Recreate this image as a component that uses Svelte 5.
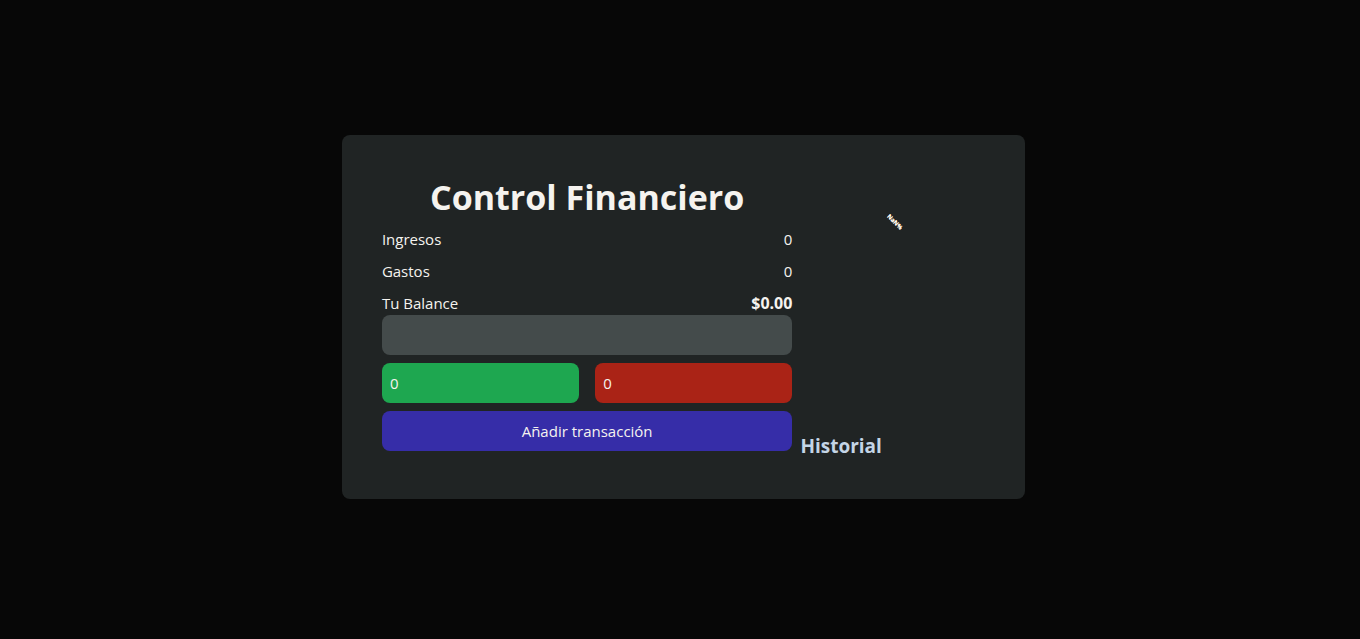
<script>
  let description = $state('');
  let income = $state(0);
  let expense = $state(0);
  let transactions = $state([]);

  const totalIncome = $derived(transactions.reduce((sum, t) => sum + t.income, 0));
  const totalExpense = $derived(transactions.reduce((sum, t) => sum + t.expense, 0));
  const balance = $derived(totalIncome - totalExpense);
  const share = (part) => `${Math.round((part * 100) / (totalIncome + totalExpense))}%`;

  function addTransaction(event) {
    event.preventDefault();
    transactions = [...transactions, { description, income: Number(income), expense: Number(expense) }];
    description = '';
    income = 0;
    expense = 0;
  }
</script>

<div class="page">
  <main class="card">
    <section class="panel">
      <h1>Control Financiero</h1>
      <dl class="totals">
        <div class="row"><dt>Ingresos</dt><dd>{totalIncome}</dd></div>
        <div class="row"><dt>Gastos</dt><dd>{totalExpense}</dd></div>
        <div class="row"><dt>Tu Balance</dt><dd class="balance">${balance.toFixed(2)}</dd></div>
      </dl>
      <form onsubmit={addTransaction}>
        <input class="field" type="text" aria-label="Descripción" bind:value={description} />
        <div class="amounts">
          <input class="field income" type="text" inputmode="decimal" aria-label="Ingreso" bind:value={income} />
          <input class="field expense" type="text" inputmode="decimal" aria-label="Gasto" bind:value={expense} />
        </div>
        <button type="submit">Añadir transacción</button>
      </form>
    </section>
    <section class="side">
      <svg class="chart" viewBox="0 0 185 96" role="img" aria-label="Ingresos y gastos">
        <g transform="translate(95 47) rotate(45)" text-anchor="middle" font-size="6" font-weight="700">
          <text y="2" fill="#ffdfae">{share(totalIncome)}</text>
          <text y="2" fill="#ffffff">{share(totalExpense)}</text>
        </g>
      </svg>
      <h2>Historial</h2>
    </section>
  </main>
</div>

<style>
  :global(body) {
    margin: 0;
    background: #070707;
  }

  .page {
    box-sizing: border-box;
    min-height: 100vh;
    padding: 0 0 5px 7px;
    display: flex;
    align-items: center;
    justify-content: center;
    color: #f5f3ef;
    font: 15px/24px "Open Sans", "Noto Sans", sans-serif;
  }

  .card {
    box-sizing: border-box;
    width: 50.5%;
    padding: 40px;
    border-radius: 8px;
    background: #202424;
    display: grid;
    grid-template-columns: 20fr 9fr;
    gap: 8px;
  }

  .panel,
  .side,
  .totals,
  form {
    display: flex;
    flex-direction: column;
    min-width: 0;
  }

  h1 {
    margin: 0;
    padding: 2px 0 10px;
    font-size: 34px;
    line-height: 40px;
    font-weight: 700;
    text-align: center;
  }

  .totals {
    margin: 0;
    gap: 8px;
  }

  .row {
    display: flex;
    justify-content: space-between;
  }

  dd {
    margin: 0;
  }

  .balance {
    font-size: 16px;
    font-weight: 700;
  }

  form {
    gap: 8px;
    padding-bottom: 8px;
  }

  .amounts {
    display: grid;
    grid-template-columns: 1fr 1fr;
    gap: 16px;
  }

  .field,
  button {
    box-sizing: border-box;
    width: 100%;
    height: 40px;
    padding: 8px;
    border: 0;
    border-radius: 8px;
    font: inherit;
    color: inherit;
    background: #444b4b;
  }

  .income {
    background: #1ea750;
  }

  .expense {
    background: #aa2316;
  }

  button {
    background: #362da8;
    cursor: pointer;
  }

  .side {
    justify-content: space-between;
  }

  .chart {
    display: block;
    width: 100%;
  }

  h2 {
    margin: 0;
    font-size: 19px;
    line-height: 26px;
    font-weight: 700;
    color: #c4d5e6;
  }
</style>
